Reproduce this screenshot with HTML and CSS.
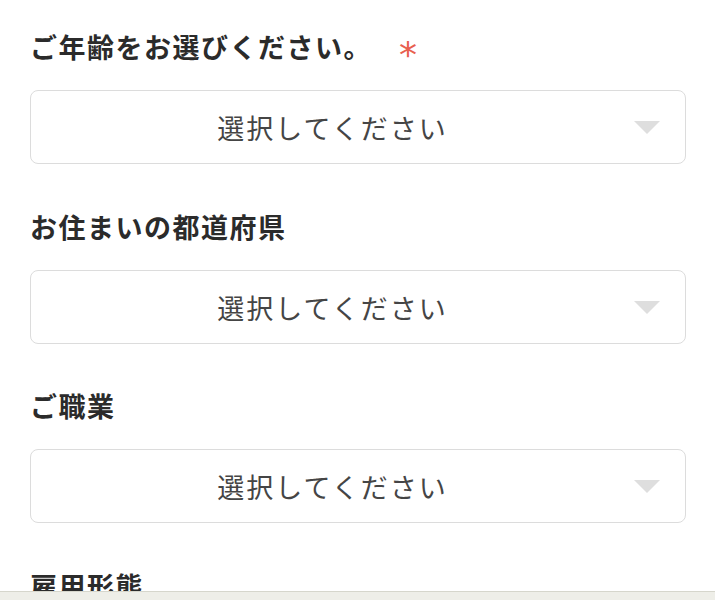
FILE: index.html
```html
<!DOCTYPE html>
<html lang="ja">
<head>
<meta charset="utf-8">
<link rel="stylesheet" href="styles.css">
</head>
<body>
<form class="form">
  <div class="field">
    <div class="label">ご年齢をお選びください。<span class="req">*</span></div>
    <div class="select"><span class="placeholder">選択してください</span><svg class="arrow" viewBox="0 0 26 13" width="26" height="13"><path d="M0 0H26L13 13Z" fill="#dedede"/></svg></div>
  </div>
  <div class="field">
    <div class="label">お住まいの都道府県</div>
    <div class="select"><span class="placeholder">選択してください</span><svg class="arrow" viewBox="0 0 26 13" width="26" height="13"><path d="M0 0H26L13 13Z" fill="#dedede"/></svg></div>
  </div>
  <div class="field">
    <div class="label">ご職業</div>
    <div class="select"><span class="placeholder">選択してください</span><svg class="arrow" viewBox="0 0 26 13" width="26" height="13"><path d="M0 0H26L13 13Z" fill="#dedede"/></svg></div>
  </div>
  <div class="field">
    <div class="label">雇用形態</div>
  </div>
</form>
<div class="bottombar"></div>
</body>
</html>
```
FILE: styles.css
```css
html, body {
  margin: 0;
  padding: 0;
  background: #ffffff;
}
body {
  font-family: "Noto Sans CJK JP", "Noto Sans", sans-serif;
  color: #2a2a2a;
  overflow: hidden;
  height: 600px;
}
.form {
  padding: 27px 29px 0 30px;
}
.field {
  margin-bottom: 43px;
}
.field:nth-child(2) {
  margin-bottom: 42px;
}
.label {
  font-size: 27px;
  font-weight: 700;
  line-height: 40px;
  letter-spacing: 1.5px;
  margin-bottom: 23px;
  color: #2b2b2b;
}
.req {
  display: inline-block;
  color: #e8604f;
  font-family: "DejaVu Sans", sans-serif;
  font-weight: 400;
  margin-left: 27px;
  font-size: 36px;
  line-height: 20px;
  vertical-align: middle;
  position: relative;
  top: 4px;
}
.select {
  box-sizing: border-box;
  height: 74px;
  border: 1.5px solid #dcdcdc;
  border-radius: 8px;
  display: flex;
  align-items: center;
  padding-right: 25px;
  background: #fff;
}
.placeholder {
  flex: 1;
  text-align: center;
  font-size: 27px;
  letter-spacing: 2px;
  color: #454545;
  padding-left: 28px;
  padding-right: 28px;
}
.arrow {
  display: block;
  margin-top: 1px;
}
.bottombar {
  position: fixed;
  left: 0;
  right: 0;
  bottom: 0;
  height: 8px;
  background: #eeeee8;
  border-top: 1px solid #d6d6cc;
}
```
